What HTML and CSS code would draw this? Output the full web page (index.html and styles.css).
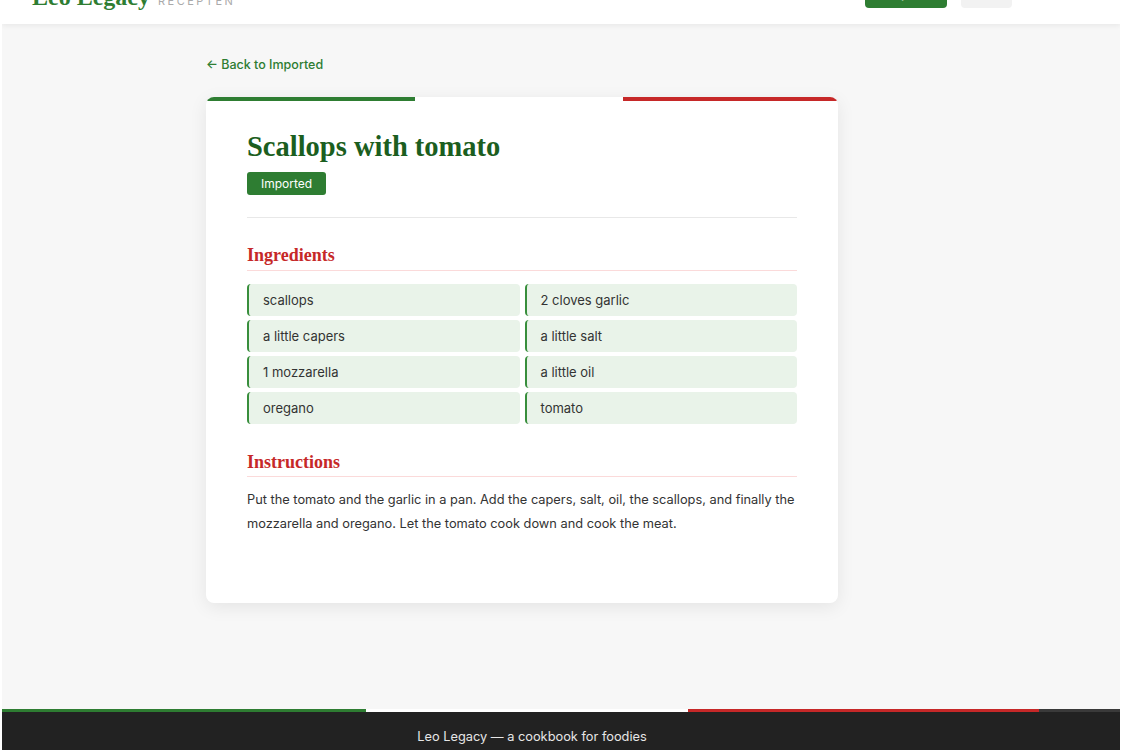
FILE: index.html
```html
<!DOCTYPE html>
<html lang="en">
<head>
    <meta charset="UTF-8">
    <meta name="viewport" content="width=device-width, initial-scale=1.0">
    <title>Scallops with tomato - Leo Legacy</title>
    <link rel="stylesheet" href="styles.css">
</head>
<body>

<header class="site-header">
    <div class="header-inner">
        <a class="brand" href="#">
            <span class="brand-name">Leo Legacy</span>
            <span class="brand-sub">Recepten</span>
        </a>
        <nav class="header-actions">
            <button class="btn btn-green">Import</button>
            <button class="btn btn-light">Uit</button>
        </nav>
    </div>
</header>

<main class="layout">
    <div class="container">
        <a class="back-link" href="#">&larr; Back to Imported</a>

        <article class="recipe-card">
            <div class="tricolor"></div>
            <div class="recipe-body">
                <div class="recipe-head">
                    <h1>Scallops with tomato</h1>
                    <span class="badge">Imported</span>
                </div>

                <h2 class="section-title">Ingredients</h2>
                <ul class="ingredients">
                    <li>scallops</li>
                    <li>2 cloves garlic</li>
                    <li>a little capers</li>
                    <li>a little salt</li>
                    <li>1 mozzarella</li>
                    <li>a little oil</li>
                    <li>oregano</li>
                    <li>tomato</li>
                </ul>

                <h2 class="section-title">Instructions</h2>
                <p class="instructions">Put the tomato and the garlic in a pan. Add the capers, salt, oil, the scallops, and finally the mozzarella and oregano. Let the tomato cook down and cook the meat.</p>
            </div>
        </article>
    </div>
</main>

<footer class="site-footer">
    <div class="footer-text">Leo Legacy &mdash; a cookbook for foodies</div>
</footer>

</body>
</html>
```

FILE: styles.css
```css
body {
    margin: 0;
    font-family: 'Inter', 'Roboto', sans-serif;
    background: #f7f7f7;
    border-left: 2px solid #fff;
    border-right: 2px solid #fff;
    color: #333;
}
a {
    text-decoration: none;
}

.site-header {
    background: #fff;
    margin-top: -40px;
    box-shadow: 0 2px 5px rgba(0, 0, 0, 0.06);
}
.header-inner {
    width: 1040px;
    box-sizing: border-box;
    padding: 0 30px;
    height: 64px;
    display: flex;
    align-items: center;
    justify-content: space-between;
}
.brand {
    display: flex;
    align-items: baseline;
    gap: 8px;
    padding-top: 11px;
}
.brand-name {
    font-family: 'Liberation Serif', serif;
    font-weight: bold;
    font-size: 24px;
    color: #2e7d32;
}
.brand-sub {
    font-size: 11px;
    letter-spacing: 2.5px;
    text-transform: uppercase;
    color: #aaa;
}
.header-actions {
    display: flex;
    gap: 14px;
    margin-top: 2px;
}
.btn {
    font-family: inherit;
    font-size: 13px;
    height: 30px;
    border: none;
    border-radius: 4px;
    cursor: pointer;
}
.btn-green {
    width: 82px;
    background: #2e7d32;
    color: #fff;
}
.btn-light {
    width: 51px;
    background: #f2f2f2;
    color: #555;
}

/* main column */
.layout {
    width: 1040px;
    padding: 29px 0 106px;
}
.container {
    max-width: 632px;
    margin: 0 auto;
}
.back-link {
    display: inline-block;
    font-size: 12.5px;
    font-weight: 500;
    line-height: 18px;
    color: #2e7d32;
    margin-bottom: 23px;
}

.recipe-card {
    background: #fff;
    border-radius: 8px;
    overflow: hidden;
    box-shadow: 0 4px 18px rgba(0, 0, 0, 0.08);
}
.tricolor {
    height: 4px;
    background: linear-gradient(to right, #2e7d32 0 33%, #fff 33% 66%, #c62828 66% 100%);
}
.recipe-body {
    padding: 29px 41px 67px;
}
.recipe-head {
    border-bottom: 1px solid #e8e8e8;
    padding-bottom: 22px;
}
h1 {
    font-family: 'Liberation Serif', serif;
    font-weight: bold;
    font-size: 28.5px;
    line-height: 1.2;
    color: #1b5e20;
    margin: 0 0 8px;
}
.badge {
    display: inline-block;
    background: #2e7d32;
    color: #fff;
    font-size: 12px;
    line-height: 15px;
    padding: 4px 14px;
    border-radius: 3px;
}

.section-title {
    font-family: 'Liberation Serif', serif;
    font-weight: bold;
    font-size: 18px;
    line-height: 1.3;
    color: #c62828;
    margin: 26px 0 13px;
    padding-bottom: 2px;
    border-bottom: 1px solid #fbdada;
}
.ingredients {
    list-style: none;
    margin: 0;
    padding: 0;
    display: grid;
    grid-template-columns: 1fr 1fr;
    gap: 4px 5px;
}
.ingredients li {
    background: #e9f3e9;
    border-left: 2px solid #388e3c;
    border-radius: 4px;
    padding: 8px 14px;
    font-size: 13px;
    line-height: 16px;
}
.ingredients + .section-title {
    margin-top: 27px;
    margin-bottom: 11px;
}
.instructions {
    margin: 0;
    font-size: 12.8px;
    line-height: 24px;
    color: #333;
}

/* footer with the flag stripe on top */
.site-footer {
    background: #222;
    border-top: 3px solid transparent;
    border-image: linear-gradient(to right, #2e7d32 0 364px, #fff 364px 686px, #c62828 686px 1036px, #3a3a3a 1036px) 1;
    padding: 17px 0 8px;
}
.footer-text {
    width: 1040px;
    box-sizing: border-box;
    padding-left: 20px;
    text-align: center;
    font-size: 12.8px;
    line-height: 16px;
    color: #e6e6e6;
}
```
